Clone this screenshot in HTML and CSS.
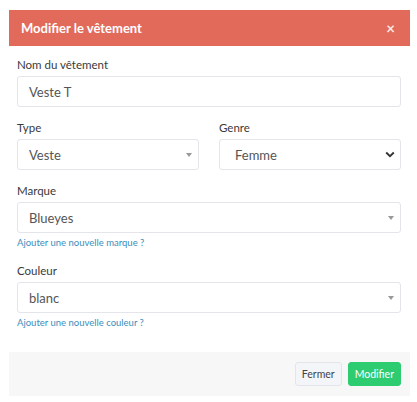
FILE: index.html
```html
<!DOCTYPE html>
<html lang="fr">
<head>
<meta charset="utf-8">
<link rel="stylesheet" href="styles.css">
</head>
<body>
<div class="modal">
  <div class="modal-header">
    <span class="title">Modifier le vêtement</span>
    <span class="close">×</span>
  </div>
  <div class="modal-body">
    <div class="group">
      <div class="label">Nom du vêtement</div>
      <div class="field">Veste T</div>
    </div>
    <div class="row">
      <div class="group">
        <div class="label">Type</div>
        <div class="field select"><span>Veste</span><span class="caret"></span></div>
      </div>
      <div class="group">
        <div class="label">Genre</div>
        <div class="field native"><span>Femme</span>
          <svg class="chev" width="10" height="7" viewBox="0 0 10 7"><path d="M1.2 1.5 L5 5.2 L8.8 1.5" fill="none" stroke="#333" stroke-width="1.8"/></svg>
        </div>
      </div>
    </div>
    <div class="group">
      <div class="label">Marque</div>
      <div class="field select"><span>Blueyes</span><span class="caret"></span></div>
      <a class="link">Ajouter une nouvelle marque ?</a>
    </div>
    <div class="group">
      <div class="label">Couleur</div>
      <div class="field select"><span>blanc</span><span class="caret"></span></div>
      <a class="link">Ajouter une nouvelle couleur ?</a>
    </div>
  </div>
  <div class="modal-footer">
    <button class="btn btn-default">Fermer</button>
    <button class="btn btn-success">Modifier</button>
  </div>
</div>
</body>
</html>
```
FILE: styles.css
```css
html, body {
  margin: 0;
  padding: 0;
  background: #fff;
}
body {
  font-family: Lato, "Open Sans", sans-serif;
  color: #333;
}
.modal {
  margin: 10px 0 0 9px;
  width: 401px;
  background: #fff;
}
.modal-header {
  height: 36px;
  background: #e26a5b;
  display: flex;
  align-items: center;
  justify-content: space-between;
  padding: 0 15px 0 12px;
  color: #fff;
}
.title {
  font-weight: 700;
  font-size: 13px;
}
.close {
  font-weight: 700;
  font-size: 15px;
  opacity: 0.85;
}
.modal-body {
  padding: 10px 9px 22px 8px;
}
.group {
  margin-bottom: 12px;
}
.row {
  display: flex;
  gap: 20px;
}
.row .group {
  flex: 1;
}
.label {
  font-size: 11.5px;
  line-height: 18px;
  margin-bottom: 2px;
  color: #3a3a3a;
}
.field {
  box-sizing: border-box;
  height: 31px;
  border: 1px solid #e3e5ea;
  border-radius: 3px;
  padding: 0 11px;
  display: flex;
  align-items: center;
  justify-content: space-between;
  font-size: 13px;
  color: #555;
}
.field.native {
  padding: 0 5px 0 15px;
}
.caret {
  width: 0;
  height: 0;
  border-left: 3px solid transparent;
  border-right: 3px solid transparent;
  border-top: 4px solid #999;
  margin-right: -5px;
}
.chev {
  display: block;
}
.link {
  display: block;
  font-size: 9.5px;
  line-height: 14px;
  color: #3c8dbc;
  margin-top: 3px;
  margin-bottom: 12px;
}
.modal-body .group:last-child {
  margin-bottom: 0;
}
.modal-body .group:last-child .link {
  margin-bottom: 0;
}
.modal-footer {
  background: #f7f7f7;
  height: 44px;
  box-sizing: border-box;
  display: flex;
  align-items: center;
  justify-content: flex-end;
  gap: 6px;
  padding: 0 9px 0 0;
}
.btn {
  font-family: inherit;
  font-size: 10.5px;
  height: 24px;
  border-radius: 3px;
  padding: 0 6px;
  cursor: pointer;
}
.btn-default {
  background: #f4f5f8;
  border: 1px solid #e3e5ea;
  color: #444;
}
.btn-success {
  background: #2ecc71;
  border: 1px solid #2ecc71;
  color: #fff;
}
```
